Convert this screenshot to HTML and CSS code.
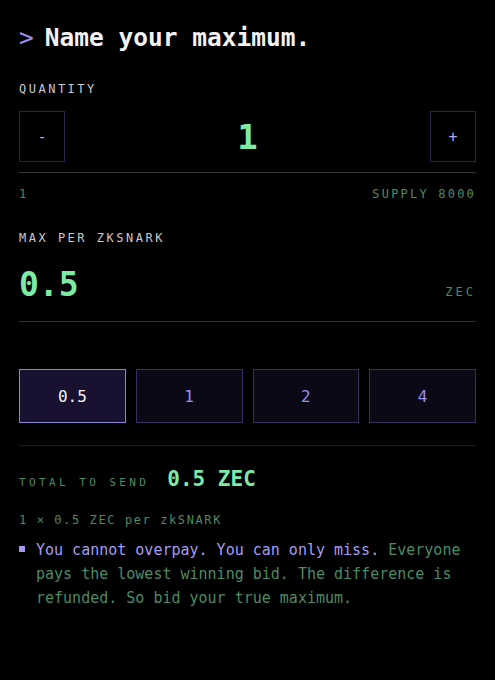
FILE: index.html
```html
<!DOCTYPE html>
<html>
<head>
<meta charset="utf-8">
<link rel="stylesheet" href="styles.css">
</head>
<body>
<div class="page">
  <h1 class="title"><span class="prompt">&gt;</span><span class="title-text">Name your maximum.</span></h1>

  <div class="label label-qty">QUANTITY</div>
  <div class="stepper">
    <button class="step">-</button>
    <div class="qty">1</div>
    <button class="step">+</button>
  </div>
  <div class="range">
    <span>1</span>
    <span>SUPPLY 8000</span>
  </div>

  <div class="label label-max">MAX PER ZKSNARK</div>
  <div class="amount">
    <span class="amount-value">0.5</span>
    <span class="amount-unit">ZEC</span>
  </div>

  <div class="presets">
    <button class="preset active">0.5</button>
    <button class="preset">1</button>
    <button class="preset">2</button>
    <button class="preset">4</button>
  </div>

  <div class="total">
    <span class="total-label">TOTAL TO SEND</span>
    <span class="total-value">0.5 ZEC</span>
  </div>
  <div class="breakdown">1 × 0.5 ZEC per zkSNARK</div>

  <div class="note">
    <span class="bullet"></span>
    <p class="note-text"><span class="note-strong">You cannot overpay. You can only miss.</span> Everyone pays the lowest winning bid. The difference is refunded. So bid your true maximum.</p>
  </div>
</div>
</body>
</html>
```

FILE: styles.css
```css
html, body {
  margin: 0;
  padding: 0;
  background: #000;
}
body {
  font-family: "DejaVu Sans Mono", "Liberation Mono", monospace;
  color: #e8e8ec;
}
.page {
  padding: 22px 19px 0;
  width: 457px;
}
.title {
  margin: 0;
  display: flex;
  gap: 11px;
  font-size: 24.5px;
  line-height: 32px;
  font-weight: bold;
  color: #f2f2f4;
}
.prompt {
  color: #9d8ff0;
  font-weight: normal;
}
.label {
  font-size: 12px;
  line-height: 14px;
  letter-spacing: 2.5px;
  color: #c9c9cf;
}
.label-qty {
  margin-top: 28px;
}
.stepper {
  margin-top: 15px;
  display: flex;
  align-items: center;
  justify-content: space-between;
  padding-bottom: 10px;
  border-bottom: 1px solid #2c3a33;
}
.step {
  width: 46px;
  height: 51px;
  box-sizing: border-box;
  background: #000;
  border: 1px solid #2a2350;
  color: #b4a8f4;
  font-family: inherit;
  font-size: 15px;
  padding: 0;
}
.qty {
  font-size: 34px;
  font-weight: bold;
  color: #7eeaa6;
  line-height: 40px;
}
.range {
  margin-top: 14px;
  display: flex;
  justify-content: space-between;
  font-size: 12px;
  line-height: 14px;
  letter-spacing: 2.2px;
  color: #4f8a62;
}
.label-max {
  margin-top: 30px;
}
.amount {
  margin-top: 20px;
  display: flex;
  justify-content: space-between;
  align-items: baseline;
  padding-bottom: 16px;
  border-bottom: 1px solid #1f3a2c;
}
.amount-value {
  font-size: 33px;
  line-height: 40px;
  font-weight: bold;
  color: #7eeaa6;
}
.amount-unit {
  font-size: 12px;
  letter-spacing: 3px;
  color: #4f8a62;
}
.presets {
  margin-top: 47px;
  display: grid;
  grid-template-columns: repeat(4, 1fr);
  gap: 10px;
  padding-bottom: 22px;
  border-bottom: 1px solid #1c1c20;
}
.preset {
  height: 54px;
  box-sizing: border-box;
  background: #0b0915;
  border: 1px solid #37305e;
  color: #9c90ea;
  font-family: inherit;
  font-size: 16px;
  padding: 0;
}
.preset.active {
  background: #181130;
  border-color: #8f83d6;
  color: #f2f2f4;
}
.total {
  margin-top: 21px;
  display: flex;
  align-items: baseline;
  gap: 18px;
}
.total-label {
  font-size: 11px;
  letter-spacing: 3.4px;
  color: #4f8a62;
}
.total-value {
  font-size: 21px;
  line-height: 24px;
  font-weight: bold;
  color: #7eeaa6;
}
.breakdown {
  margin-top: 22px;
  font-size: 12px;
  line-height: 14px;
  letter-spacing: 1.6px;
  color: #4f8a62;
}
.note {
  margin-top: 11px;
  display: flex;
  align-items: flex-start;
  gap: 11px;
}
.bullet {
  flex: none;
  width: 6px;
  height: 6px;
  margin-top: 8px;
  background: #a497f0;
}
.note-text {
  margin: 0;
  font-size: 15px;
  line-height: 24px;
  color: #4f8a62;
}
.note-strong {
  color: #a69bf2;
}
```
